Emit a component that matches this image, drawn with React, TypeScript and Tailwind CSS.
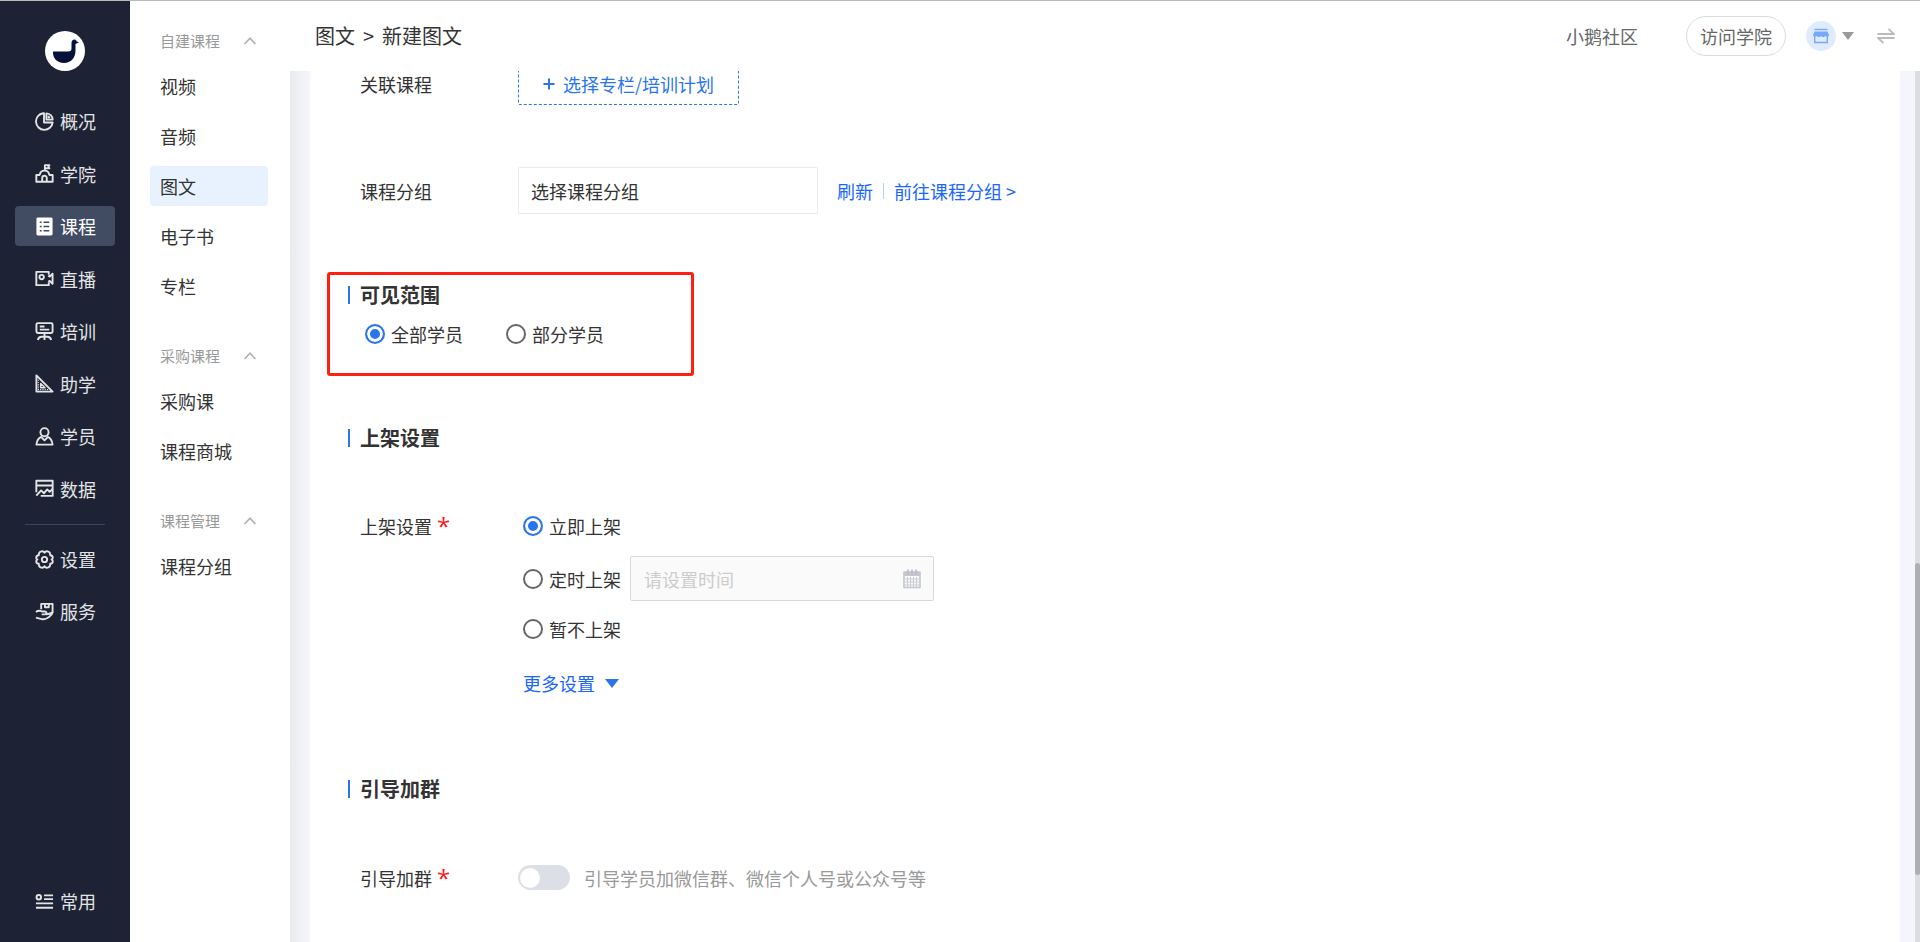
import { useState } from "react";
import type { ReactNode } from "react";

const stroke = {
    fill: "none",
    stroke: "currentColor",
    strokeWidth: 2,
    strokeLinejoin: "round" as const,
};

const icons: Record<string, ReactNode> = {
    overview: (
        <g {...stroke}>
            <path d="M8.500 1.300A8.800 8.800 0 1 0 18.600 11H9.500V1.300z" />
            <path d="M12 1.400v6.600h6.600A7 7 0 0 0 12 1.400z" />
            <path d="M14.200 4v1.800H16" />
        </g>
    ),
    academy: (
        <g {...stroke}>
            <path d="M10.400 6.500V1.200h4.800L14 2.700l1.200 1.700h-4.600" />
            <path d="M5 11.500C5.400 8.600 7.400 7 10 7s4.600 1.600 5 4.500" />
            <path d="M5.500 11.500H1.400v7.200h17.200v-7.200h-4.100" />
            <path d="M7.600 18.500v-3.800a2.400 2.400 0 0 1 4.800 0v3.800" />
        </g>
    ),
    course: (
        <>
            <rect x="1.500" y=".5" width="17" height="19" rx="1.500" fill="currentColor" />
            <path d="M5 5.500h2M9 5.500h6M5 10h2M9 10h6M5 14.500h2M9 14.500h6" stroke="#414b62" strokeWidth="1.600" />
        </>
    ),
    live: (
        <g {...stroke}>
            <path d="M14.500 6V3H1.400v14h13.100v-3" />
            <path d="M14 7l1.500 1 3-3v10.500l-3-3-1.500 1" />
            <circle cx="7" cy="8.500" r="2.300" />
        </g>
    ),
    training: (
        <g {...stroke}>
            <rect x="1.500" y="1.200" width="17" height="10.300" rx="1.500" />
            <path d="M5 4.800h5M5 8h10M10 11.500V19M3 19c.5-2.500 2-3.500 4-3.500h6c2 0 3.500 1 4 3.500" />
        </g>
    ),
    assist: (
        <g {...stroke}>
            <path d="M1.500 1.500v17h17z" />
            <path d="M6 10v4.500h4.500z" strokeWidth="1.600" />
            <path d="M3 16.500h12M3.500 6v10" strokeWidth="1.200" strokeDasharray="1.200 1.200" />
        </g>
    ),
    student: (
        <g {...stroke}>
            <circle cx="10" cy="5.500" r="4.300" />
            <path d="M6.500 10.500c-2.500 1-4.500 4-5 8h17c-.5-4-2.500-7-5-8L10 14z" />
        </g>
    ),
    data: (
        <g {...stroke}>
            <path d="M1.400 14V1.800h17.200v16H6M1.400 6.800h17.200" />
            <path d="M1.400 17.500l5-5.500 3 3 3.500-4 2.500 2.500 3-3" />
        </g>
    ),
    settings: (
        <g {...stroke}>
            <path d="M10 2.800c1-1.600 2.600-1.900 4.200-1 1.500.8 2 2 1.800 3.700 1.800.1 2.700 1.200 2.700 2.700 0 .7-.4 1.300-1.200 1.800.8.500 1.200 1.100 1.200 1.800 0 1.500-.9 2.600-2.700 2.700.2 1.700-.3 2.900-1.800 3.700-1.600.9-3.200.6-4.200-1-1 1.600-2.600 1.900-4.200 1-1.500-.8-2-2-1.800-3.700-1.800-.1-2.700-1.200-2.700-2.700 0-.7.4-1.300 1.200-1.800-.8-.5-1.200-1.100-1.200-1.800 0-1.500.9-2.600 2.700-2.700-.2-1.700.3-2.900 1.800-3.700 1.600-.9 3.200-.6 4.200 1z" />
            <circle cx="10" cy="10" r="2.800" />
        </g>
    ),
    service: (
        <g {...stroke}>
            <path d="M6.500 7.500V2h12v9M10.500 2v3.500h4V2" />
            <path d="M1 10.500c2.500-2 4.500-1.500 6.500-.5h3c2.500.5 2 3 0 3H7M11.500 13c2.500 0 4.500-1 7-2-.5 3-3 4-4.500 5.200-2 1.800-4.500 2.300-7 1.800L1 16.500" />
        </g>
    ),
    common: (
        <g {...stroke}>
            <circle cx="4" cy="5.500" r="2.400" />
            <path d="M9.500 3.500H19M9.500 7.500H19M1 12h18M1 16.500h18" />
        </g>
    ),
};

const mainNav = [
    { icon: "overview", label: "概况" },
    { icon: "academy", label: "学院" },
    { icon: "course", label: "课程" },
    { icon: "live", label: "直播" },
    { icon: "training", label: "培训" },
    { icon: "assist", label: "助学" },
    { icon: "student", label: "学员" },
    { icon: "data", label: "数据" },
];

const subNav = [
    { title: "自建课程", items: ["视频", "音频", "图文", "电子书", "专栏"] },
    { title: "采购课程", items: ["采购课", "课程商城"] },
    { title: "课程管理", items: ["课程分组"] },
];

const NavItem = ({ icon, label, active = false }: { icon: string; label: string; active?: boolean }) => (
    <a
        href="#"
        className={`flex h-10 items-center gap-[6px] rounded pl-5 text-lg leading-5 ${active ? "bg-[#414b62] text-white" : "text-[#e3e4e6]"}`}
    >
        <svg viewBox="0 0 20 20" className="size-[19px] shrink-0">{icons[icon]}</svg>
        <span>{label}</span>
    </a>
);

const SideBar = () => (
    <nav className="flex w-[130px] shrink-0 flex-col bg-[#1e2235] px-[15px] pb-[21px] pt-[30px]">
        <a href="#" aria-label="首页" className="self-center">
            <svg viewBox="0 0 40 40" className="size-10">
                <circle cx="20" cy="20" r="20" fill="#fff" />
                <path d="M8 20.500h15c2.800 0 3.500-1 3.500-3.500v-5c0-4 4-4.800 5.300-1.600l2.200.8-3.500 1.800v6.500C30.500 27 26 32 19 32S7.500 27 8 20.500z" fill="#06123a" />
            </svg>
        </a>
        <div className="mt-[30px] flex h-[408px] flex-col justify-between">
            {mainNav.map((item) => (
                <NavItem key={item.label} {...item} active={item.label === "课程"} />
            ))}
        </div>
        <hr className="mx-[10px] mt-[15px] border-[#3c455c]" />
        <div className="mt-[14px] flex flex-col gap-3">
            <NavItem icon="settings" label="设置" />
            <NavItem icon="service" label="服务" />
        </div>
        <div className="mt-auto">
            <NavItem icon="common" label="常用" />
        </div>
    </nav>
);

const SubMenu = () => (
    <aside className="flex w-[160px] shrink-0 flex-col gap-[30px] px-5 pt-5">
        {subNav.map((group) => (
            <div key={group.title}>
                <button className="flex h-10 w-full items-center justify-between pl-[10px] pr-[14px] text-[15px] text-[#999]">
                    {group.title}
                    <svg viewBox="0 0 12 8" className="h-2 w-3" fill="none" stroke="#b0b0b0" strokeWidth="1.600">
                        <path d="M.6 7 6 1.200 11.400 7" />
                    </svg>
                </button>
                <ul className="mt-[5px] flex flex-col gap-[10px]">
                    {group.items.map((item) => (
                        <li key={item}>
                            <a
                                href="#"
                                className={`flex h-10 w-[118px] items-center rounded pl-[10px] text-lg leading-5 text-[#333] ${item === "图文" ? "bg-[#e8f2ff]" : ""}`}
                            >
                                {item}
                            </a>
                        </li>
                    ))}
                </ul>
            </div>
        ))}
    </aside>
);

const Header = () => (
    <header className="flex h-[70px] shrink-0 items-center px-[25px]">
        <h1 className="flex items-center gap-2 text-xl text-[#333]">
            <span>图文</span>
            <span>&gt;</span>
            <span>新建图文</span>
        </h1>
        <a href="#" className="ml-auto text-lg text-[#666]">小鹅社区</a>
        <button className="ml-12 h-10 w-[100px] rounded-full border border-[#dcdcdc] text-lg leading-5 text-[#666]">访问学院</button>
        <button aria-label="店铺" className="ml-5 flex items-center gap-[6px]">
            <svg viewBox="0 0 30 30" className="size-[30px]">
                <circle cx="15" cy="15" r="15" fill="#dfebff" />
                <path d="M8.500 8.500h13" stroke="#79a8fb" strokeWidth="1.400" />
                <path d="M8.500 10.500h13l1.500 3.500c0 2.200-2.600 2.600-3.700 1-1 1.500-3.300 1.500-4.300 0-1 1.500-3.300 1.500-4.300 0-1.100 1.600-3.700 1.200-3.700-1z" fill="#79a8fb" />
                <path d="M8.700 16v5.500h12.600V16" fill="none" stroke="#79a8fb" strokeWidth="1.400" />
            </svg>
            <svg viewBox="0 0 12 8" className="h-2 w-3">
                <path d="M0 0h12L6 8z" fill="#999" />
            </svg>
        </button>
        <button aria-label="切换" className="ml-[23px]">
            <svg viewBox="0 0 18 16" className="h-4 w-[18px]" fill="none" stroke="#bbb" strokeWidth="1.800">
                <path d="M.5 6h16.500L11.500.8M17.500 10H1l5.500 5.200" />
            </svg>
        </button>
    </header>
);

const SectionTitle = ({ children }: { children: ReactNode }) => (
    <h2 className="flex h-5 items-center gap-[10px] pl-[38px] text-xl font-bold leading-5 text-[#333]">
        <span className="h-[18px] w-[2px] bg-[#2a75ed]" />
        {children}
    </h2>
);

const FieldLabel = ({ children, htmlFor, required = false }: { children: ReactNode; htmlFor?: string; required?: boolean }) => (
    <label htmlFor={htmlFor} className="flex h-5 w-[158px] shrink-0 items-center gap-[5px] text-lg leading-5">
        {children}
        {required && <span className="font-['Open_Sans',sans-serif] text-2xl leading-5 text-[#ff1a1a]">*</span>}
    </label>
);

type RadioProps = { name: string; label: string; checked: boolean; onChange: () => void };

const Radio = ({ name, label, checked, onChange }: RadioProps) => (
    <label className="flex h-5 items-center gap-[6px] text-lg leading-5">
        <input
            type="radio"
            name={name}
            checked={checked}
            onChange={onChange}
            className="size-5 shrink-0 appearance-none rounded-full border-2 border-[#666] checked:border-[#2a75ed] checked:bg-[#2a75ed] checked:shadow-[inset_0_0_0_3px_white]"
        />
        {label}
    </label>
);

const CourseForm = () => {
    const [scope, setScope] = useState("全部学员");
    const [shelf, setShelf] = useState("立即上架");
    const [guide, setGuide] = useState(false);

    return (
        <form className="min-w-0 flex-1 overflow-hidden bg-white text-[#333]">
            <div className="-mt-2 flex items-center pl-[50px]">
                <FieldLabel>关联课程</FieldLabel>
                <button type="button" className="flex h-[42px] w-[221px] items-center justify-center gap-2 rounded-xs border border-dashed border-[#2a75ed] text-lg text-[#2a75ed]">
                    <svg viewBox="0 0 12 12" className="size-3" stroke="currentColor" strokeWidth="2">
                        <path d="M6 .5v11M.5 6h11" />
                    </svg>
                    选择专栏/培训计划
                </button>
            </div>

            <div className="mt-[62px] flex items-center pl-[50px]">
                <FieldLabel htmlFor="group">课程分组</FieldLabel>
                <select id="group" className="h-[47px] w-[300px] appearance-none rounded-xs border border-[#ebebeb] px-3 text-lg">
                    <option>选择课程分组</option>
                </select>
                <a href="#" className="ml-[19px] text-lg leading-5 text-[#1a66ff]">刷新</a>
                <span className="mx-[10px] h-4 w-px bg-[#b3cdfb]" />
                <a href="#" className="text-lg leading-5 text-[#1a66ff]">前往课程分组 &gt;</a>
            </div>

            <section className="relative mt-[71px]">
                <SectionTitle>可见范围</SectionTitle>
                <div className="mt-[19px] flex gap-[43px] pl-[55px]">
                    {["全部学员", "部分学员"].map((item) => (
                        <Radio key={item} name="scope" label={item} checked={scope === item} onChange={() => setScope(item)} />
                    ))}
                </div>
                <div className="pointer-events-none absolute -top-[13px] left-[17px] h-[104px] w-[367px] rounded-[3px] border-3 border-[#fd1f12]" />
            </section>

            <section className="mt-[84px]">
                <SectionTitle>上架设置</SectionTitle>
                <div className="mt-[68px] flex pl-[50px]">
                    <FieldLabel required>上架设置</FieldLabel>
                    <div className="flex flex-col items-start pl-[5px]">
                        <Radio name="shelf" label="立即上架" checked={shelf === "立即上架"} onChange={() => setShelf("立即上架")} />
                        <div className="mt-5 flex items-center gap-[9px]">
                            <Radio name="shelf" label="定时上架" checked={shelf === "定时上架"} onChange={() => setShelf("定时上架")} />
                            <div className="flex h-[45px] w-[304px] items-center rounded-xs border border-[#d9d9d9] bg-[#fafafa] pl-[13px] pr-3">
                                <input
                                    aria-label="上架时间"
                                    placeholder="请设置时间"
                                    disabled={shelf !== "定时上架"}
                                    className="min-w-0 flex-1 text-lg placeholder:text-[#ccc]"
                                />
                                <svg viewBox="0 0 18 20" className="h-5 w-[18px]">
                                    <path d="M1 3h16v15.500H1z" fill="#fafafa" stroke="#c3c7cd" strokeWidth="1.600" strokeLinejoin="round" />
                                    <path d="M1 3h16v4H1z" fill="#c3c7cd" />
                                    <path d="M5 .5v4M9 .5v4M13 .5v4" stroke="#b4b8be" strokeWidth="1.600" />
                                    <path d="M2 10h14M2 13h14M2 16h14M4.500 8v10M7.500 8v10M10.500 8v10M13.500 8v10" stroke="#c9cdd2" />
                                </svg>
                            </div>
                        </div>
                        <div className="mt-[18px]">
                            <Radio name="shelf" label="暂不上架" checked={shelf === "暂不上架"} onChange={() => setShelf("暂不上架")} />
                        </div>
                        <button type="button" className="mt-[34px] flex h-5 items-center gap-[10px] text-lg leading-5 text-[#1a66ff]">
                            更多设置
                            <svg viewBox="0 0 14 9" className="h-[9px] w-[14px]">
                                <path d="M0 0h14L7 9z" fill="#2a75ed" />
                            </svg>
                        </button>
                    </div>
                </div>
            </section>

            <section className="mt-[86px]">
                <SectionTitle>引导加群</SectionTitle>
                <div className="mt-[66px] flex items-center pl-[50px]">
                    <FieldLabel htmlFor="guide" required>引导加群</FieldLabel>
                    <button
                        id="guide"
                        type="button"
                        role="switch"
                        aria-checked={guide}
                        onClick={() => setGuide(!guide)}
                        className={`flex h-[25px] w-[52px] items-center rounded-full px-[2px] ${guide ? "justify-end bg-[#2a75ed]" : "bg-[#dcdfe6]"}`}
                    >
                        <span className="size-5 rounded-full bg-white" />
                    </button>
                    <span className="ml-[14px] text-lg leading-5 text-[#999]">引导学员加微信群、微信个人号或公众号等</span>
                </div>
            </section>
        </form>
    );
};

export default function App() {
    return (
        <div className="flex h-screen overflow-hidden border-t border-[#bbb] bg-white font-['Noto_Sans_CJK_SC',sans-serif]">
            <SideBar />
            <SubMenu />
            <div className="flex min-w-0 flex-1 flex-col">
                <Header />
                <main className="flex min-h-0 flex-1 bg-[#f4f6fb]">
                    <div className="w-5 shrink-0 bg-linear-to-r from-[#e9ebef] to-[#f4f6fb]" />
                    <CourseForm />
                    <div className="ml-[15px] w-[5px] shrink-0 bg-[#dcdde1] pt-[492px]">
                        <div className="h-[312px] rounded-full bg-[#adafb2]" />
                    </div>
                </main>
            </div>
        </div>
    );
}
